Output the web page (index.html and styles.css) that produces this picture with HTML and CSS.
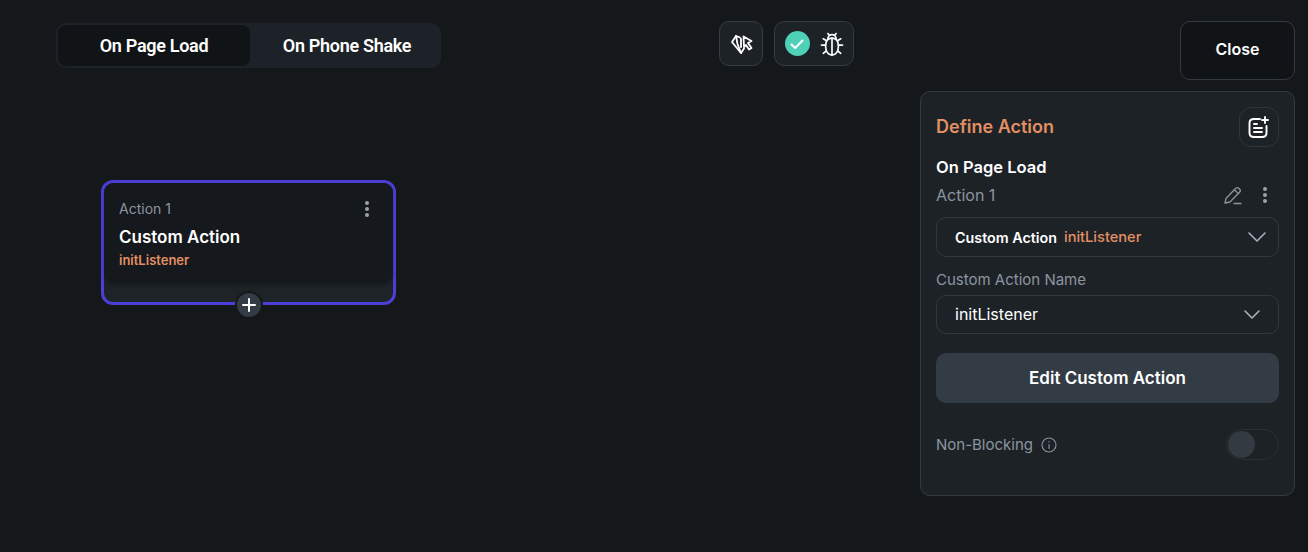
FILE: index.html
```html
<!DOCTYPE html>
<html lang="en">
<head>
    <meta charset="UTF-8">
    <meta name="viewport" content="width=device-width, initial-scale=1.0">
    <title>Action Flow Editor</title>
    <link rel="stylesheet" href="styles.css">
</head>
<body>
    <div class="page">
        <div class="canvas">
            <div class="toolbar">
                <div class="tabs">
                    <div class="tab active">On Page Load</div>
                    <div class="tab">On Phone Shake</div>
                </div>
                <div class="tool-btn">
                    <svg width="24" height="24" viewBox="0 0 24 24" fill="none" stroke="#fff" stroke-width="1.8" stroke-linejoin="round" stroke-linecap="round">
                        <path d="M7 4 L3 10 L12 21 L15 16.5"/>
                        <path d="M7 4 L11 5.5 M7 4 L8.5 12 L12 21 M12 7 V15"/>
                        <path d="M14.5 4.5 L22.5 9 L19 11 L22.5 16 L20 17.5 L17 13 L15 15 Z"/>
                    </svg>
                </div>
                <div class="tool-btn wide">
                    <span class="check">
                        <svg width="16" height="16" viewBox="0 0 16 16" fill="none" stroke="#fff" stroke-width="2" stroke-linecap="round" stroke-linejoin="round">
                            <path d="M2.5 8.5 L6.2 12 L13.5 4.5"/>
                        </svg>
                    </span>
                    <svg width="28" height="28" viewBox="0 0 24 24" fill="none" stroke="#fff" stroke-width="1.4" stroke-linecap="round" stroke-linejoin="round">
                        <path d="M12 7 C8 7 6.5 9.5 6.5 14 C6.5 18.5 9 21.5 12 21.5 C15 21.5 17.5 18.5 17.5 14 C17.5 9.5 16 7 12 7 Z"/>
                        <path d="M12 7 V21.5"/>
                        <path d="M8.5 7.5 C8.5 5.5 10 4 12 4 C14 4 15.5 5.5 15.5 7.5"/>
                        <path d="M8.5 3 L9.8 4.8 M15.5 3 L14.2 4.8"/>
                        <path d="M6.5 13 H3 M17.5 13 H21 M7 9 L4.5 7.5 M17 9 L19.5 7.5 M7 18 L4.5 20 M17 18 L19.5 20"/>
                    </svg>
                </div>
            </div>

            <div class="node">
                <div class="node-body">
                    <div class="node-head">
                        <span>Action 1</span>
                        <span class="dots"><i></i><i></i><i></i></span>
                    </div>
                    <div class="node-title">Custom Action</div>
                    <div class="node-sub">initListener</div>
                </div>
                <div class="add-btn">
                    <svg width="14" height="14" viewBox="0 0 14 14" stroke="#fff" stroke-width="2" stroke-linecap="round">
                        <path d="M7 1 V13 M1 7 H13"/>
                    </svg>
                </div>
            </div>
        </div>

        <div class="side">
            <div class="close-btn">Close</div>
            <div class="panel">
                <div class="panel-head">
                    <div class="panel-title">Define Action</div>
                    <div class="note-btn">
                        <svg width="24" height="24" viewBox="0 0 24 24" fill="none" stroke="#fff" stroke-width="1.9" stroke-linecap="round" stroke-linejoin="round">
                            <path d="M13 4 H7 C4 4 2.5 5.5 2.5 8 V18 C2.5 20.5 4 22 7 22 H15 C18 22 19.5 20.5 19.5 18 V11"/>
                            <path d="M7 9 H10 M7 13 H15 M7 17 H15"/>
                            <path d="M18 2 V8 M15 5 H21"/>
                        </svg>
                    </div>
                </div>
                <div class="trigger">On Page Load</div>
                <div class="action-row">
                    <span>Action 1</span>
                    <svg class="pencil" width="20" height="20" viewBox="0 0 20 20" fill="none" stroke="#8b95a0" stroke-width="1.3" stroke-linecap="round" stroke-linejoin="round">
                        <path d="M2 18 L3 13.5 L12.5 3.5 C13.5 2.5 15 2.5 16 3.5 L16.5 4 C17.5 5 17.5 6.3 16.5 7.3 L7 17 Z"/>
                        <path d="M11.5 5 L15.5 8.5 M11 18.5 H18"/>
                    </svg>
                    <span class="dots"><i></i><i></i><i></i></span>
                </div>
                <div class="select">
                    <span class="select-strong">Custom Action</span>
                    <span class="select-orange">initListener</span>
                    <svg class="chevron" width="20" height="12" viewBox="0 0 20 12" fill="none" stroke="#a9b2bb" stroke-width="1.6" stroke-linecap="round" stroke-linejoin="round">
                        <path d="M2 2 L10 10 L18 2"/>
                    </svg>
                </div>
                <div class="field-label">Custom Action Name</div>
                <div class="select">
                    <span class="select-value">initListener</span>
                    <svg class="chevron small" width="18" height="11" viewBox="0 0 18 11" fill="none" stroke="#a9b2bb" stroke-width="1.6" stroke-linecap="round" stroke-linejoin="round">
                        <path d="M2 2 L9 9 L16 2"/>
                    </svg>
                </div>
                <div class="edit-btn">Edit Custom Action</div>
                <div class="option-row">
                    <span>Non-Blocking</span>
                    <svg width="16" height="16" viewBox="0 0 16 16" fill="none" stroke="#8b95a0" stroke-width="1.1" stroke-linecap="round">
                        <circle cx="8" cy="8" r="7"/>
                        <path d="M8 7.5 V11.5 M8 4.6 V4.9"/>
                    </svg>
                    <div class="toggle"><div class="knob"></div></div>
                </div>
            </div>
        </div>
    </div>
</body>
</html>
```

FILE: styles.css
```css
* {
    box-sizing: border-box;
}
body {
    margin: 0;
    background-color: #14181b;
    font-family: Inter, "Noto Sans", sans-serif;
    color: #fff;
}
.page {
    display: flex;
    height: 552px;
    padding: 21px 13px 0 56px;
    overflow: hidden;
}
.canvas {
    flex: 1;
}
.toolbar {
    display: flex;
    align-items: flex-start;
}
.tabs {
    display: flex;
    width: 385px;
    height: 45px;
    margin-top: 2px;
    margin-right: 278px;
    padding: 2px;
    background: #1c2227;
    border-radius: 10px;
}
.tab {
    flex: 1;
    display: flex;
    align-items: center;
    justify-content: center;
    padding-left: 5px;
    font-family: Roboto, sans-serif;
    font-size: 18px;
    font-weight: 600;
    letter-spacing: -0.3px;
    border-radius: 8px;
}
.tab.active {
    flex: 0 0 192px;
    padding-left: 0;
    background: #111417;
}
.tool-btn {
    display: flex;
    align-items: center;
    justify-content: center;
    width: 44px;
    height: 45px;
    background: #1d2227;
    border: 1.5px solid #353b43;
    border-radius: 10px;
}
.tool-btn.wide {
    justify-content: flex-start;
    width: 80px;
    margin-left: 11px;
    padding-left: 9.5px;
    gap: 8px;
}
.check {
    display: flex;
    align-items: center;
    justify-content: center;
    width: 25px;
    height: 25px;
    background: #4fd1b8;
    border-radius: 50%;
}
.node {
    position: relative;
    width: 295px;
    height: 125px;
    margin-top: 112px;
    margin-left: 45px;
    background: #1d2327;
    border: 3px solid #4b3fd8;
    border-radius: 12px;
}
.node-body {
    height: 100px;
    padding: 17px 15px 0;
    background: #15181c;
    border-radius: 10px;
    box-shadow: 0 2px 4px rgba(0, 0, 0, 0.25);
}
.node-head {
    display: flex;
    justify-content: space-between;
    align-items: center;
    font-size: 14px;
    color: #8b95a0;
}
.node-head .dots {
    margin-right: 9px;
}
.node-title {
    margin-top: 10px;
    font-size: 17px;
    font-weight: 600;
}
.node-sub {
    margin-top: 5px;
    font-size: 13px;
    font-weight: 600;
    color: #e28f63;
}
.dots {
    display: flex;
    flex-direction: column;
    gap: 2px;
    width: 4px;
}
.dots i {
    width: 4px;
    height: 4px;
    background: #9aa3ad;
    border-radius: 50%;
}
.add-btn {
    position: absolute;
    left: 131px;
    bottom: -17px;
    display: flex;
    align-items: center;
    justify-content: center;
    width: 28px;
    height: 28px;
    background: #333b45;
    border: 2px solid #14181b;
    border-radius: 50%;
}
.side {
    display: flex;
    flex-direction: column;
    align-items: flex-end;
    width: 375px;
}
.close-btn {
    display: flex;
    align-items: center;
    justify-content: center;
    width: 115px;
    height: 59px;
    padding-bottom: 3px;
    font-size: 16px;
    font-weight: 600;
    background: #111417;
    border: 1px solid #343a41;
    border-radius: 10px;
}
.panel {
    width: 375px;
    height: 405px;
    margin-top: 11px;
    padding: 15px 15px 0;
    background: #1d2227;
    border: 1px solid #343a41;
    border-radius: 10px;
}
.panel-head {
    display: flex;
    justify-content: space-between;
    align-items: center;
}
.panel-title {
    margin-top: -2px;
    font-size: 18px;
    font-weight: 600;
    color: #e28f63;
}
.note-btn {
    display: flex;
    align-items: center;
    justify-content: center;
    width: 40px;
    height: 40px;
    border: 1px solid #2f353c;
    border-radius: 12px;
}
.trigger {
    margin-top: 10px;
    font-size: 16.5px;
    font-weight: 600;
}
.action-row {
    display: flex;
    align-items: center;
    height: 24px;
    margin-top: 6px;
    font-size: 16px;
    color: #8b95a0;
}
.action-row span:first-child {
    flex: 1;
}
.pencil {
    margin-right: 20px;
}
.action-row .dots {
    margin-right: 12px;
}
.select {
    display: flex;
    align-items: center;
    height: 40px;
    margin-top: 10px;
    padding: 0 18px;
    border: 1px solid #323840;
    border-radius: 10px;
}
.select-strong {
    font-size: 14.3px;
    font-weight: 600;
}
.select-orange {
    margin-left: 7px;
    font-size: 14.6px;
    font-weight: 500;
    color: #e28f63;
}
.select-value {
    margin-top: -2px;
    font-size: 16px;
}
.chevron {
    margin-left: auto;
    margin-right: -7px;
}
.chevron.small {
    margin-right: -1px;
}
.field-label {
    margin-top: 13px;
    font-size: 15px;
    color: #8b95a0;
}
.field-label + .select {
    margin-top: 6px;
    height: 39px;
}
.edit-btn {
    display: flex;
    align-items: center;
    justify-content: center;
    height: 50px;
    margin-top: 19px;
    font-size: 17px;
    font-weight: 600;
    background: #333b45;
    border-radius: 10px;
}
.option-row {
    display: flex;
    align-items: center;
    gap: 8px;
    height: 31px;
    margin-top: 26px;
    font-size: 15px;
    color: #8b95a0;
}
.toggle {
    display: flex;
    align-items: center;
    width: 53px;
    height: 31px;
    margin-left: auto;
    padding-left: 1px;
    border: 1px solid #2a3036;
    border-radius: 16px;
}
.knob {
    width: 27px;
    height: 27px;
    background: #333a42;
    border-radius: 50%;
}
```
